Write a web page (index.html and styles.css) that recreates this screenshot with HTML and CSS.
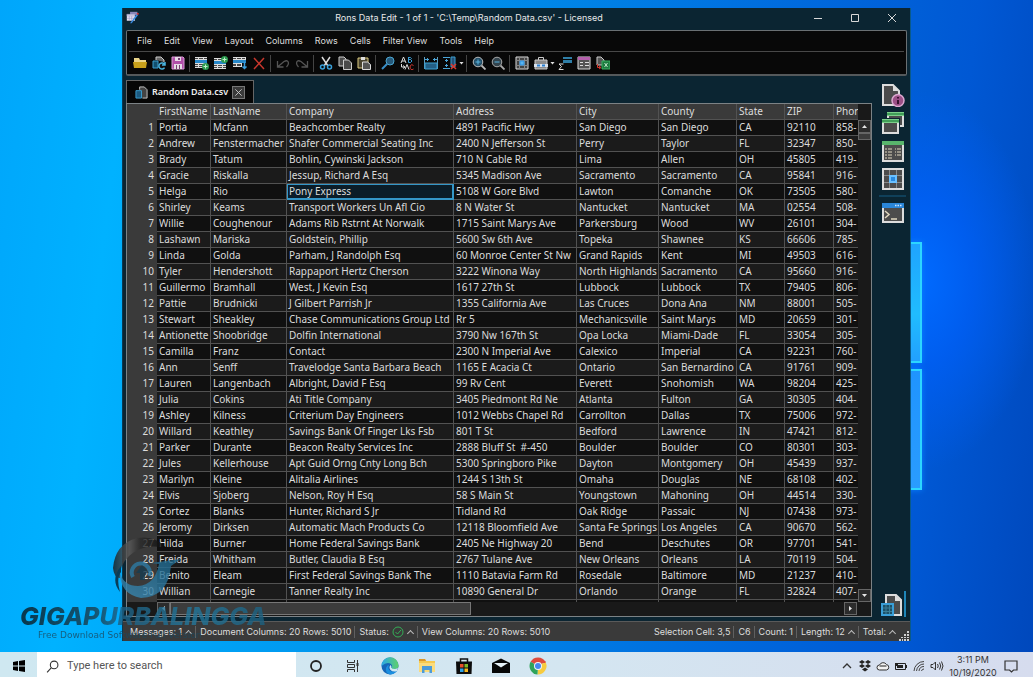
FILE: index.html
```
<!DOCTYPE html>
<html lang="en">
<head>
<meta charset="utf-8">
<title>Rons Data Edit</title>
<link rel="stylesheet" href="styles.css">
</head>
<body>
<main class="desktop">
  <div class="light" aria-hidden="true"><span class="pane pane-top"></span><span class="pane pane-bottom"></span></div>

  <section class="window">
    <header class="titlebar">
      <svg class="app-icon" viewBox="0 0 16 16"><path d="M5 1h9v4H5z" fill="#8a86b8"/><path d="M1 4h10v8H1z" fill="#e4e2f2"/><path d="M1 4h10v2H1zM4 6v6M7 6v6M1 9h10" stroke="#8b87b8" stroke-width=".6" fill="none"/><path d="M5 15L13 4l2 1-8 10z" fill="#3a8be0"/><path d="M13 4l1-2 2 1-1 2z" fill="#d33"/></svg>
      <h1 class="title">Rons Data Edit - 1 of 1 - 'C:\Temp\Random Data.csv' - Licensed</h1>
      <div class="controls">
        <button type="button" aria-label="Minimize"><svg viewBox="0 0 10 10"><path d="M1 5.500h8"/></svg></button>
        <button type="button" aria-label="Maximize"><svg viewBox="0 0 10 10"><path d="M1.500 1.500h7v7h-7z"/></svg></button>
        <button type="button" aria-label="Close"><svg viewBox="0 0 10 10"><path d="M1 1l8 8M9 1l-8 8"/></svg></button>
      </div>
    </header>

    <div class="commands">
      <nav class="menu">
        <button type="button">File</button><button type="button">Edit</button><button type="button">View</button><button type="button">Layout</button><button type="button">Columns</button><button type="button">Rows</button><button type="button">Cells</button><button type="button">Filter View</button><button type="button">Tools</button><button type="button">Help</button>
      </nav>
      <div class="toolbar">
        <div class="tools">
          <button type="button" aria-label="Open"><svg viewBox="0 0 14 14"><path d="M1 2h5l1 2h6v8H1z" fill="#e9d48a"/><path d="M0 6h14l-1 6H1z" fill="#c9a21c"/></svg></button>
          <button type="button" aria-label="Reload"><svg viewBox="0 0 14 14"><path d="M4 4V1h5l3 3v2" stroke="#ccc" fill="#666"/><path d="M1 5h5v7H1z" fill="#12506f" stroke="#3a9fd0"/><path d="M12.500 8.500a3 3 0 1 0 0 3M13 6v3h-3" stroke="#49b4e0" stroke-width="1.500" fill="#101010"/></svg></button>
          <button type="button" aria-label="Save"><svg viewBox="0 0 14 14"><path d="M1 1h11l1 1v11H1z" fill="#b04fa8" stroke="#d99ad4"/><path d="M4 1h6v4H4zM3 8h8v5H3z" fill="#e6dbe6"/><path d="M7 2h2v2H7zM5 9h1v4H5zM8 9h1v4H8z" fill="#744070"/></svg></button>
        </div>
        <div class="tools">
          <button type="button" aria-label="Add row"><svg viewBox="0 0 14 14"><path d="M0 1h12v11H0z" fill="#ddd"/><path d="M0 4h12v3H0z" fill="#2787c8"/><path d="M0 2h3v1H0zM4 2h4v1H4zM9 2h3v1H9zM0 8h3v1H0zM4 8h4v1H4zM0 10h3v1H0zM4 10h4v1H4z" fill="#444"/><circle cx="10.500" cy="10.500" r="3.500" fill="#2d9a50"/><path d="M8.500 10.500h4M10.500 8.500v4" stroke="#bff0c8"/></svg></button>
          <button type="button" aria-label="Insert row"><svg viewBox="0 0 14 14"><path d="M0 2h12v11H0z" fill="#ddd"/><path d="M0 5h12v3H0z" fill="#2787c8"/><path d="M0 3h3v1H0zM4 3h4v1H4zM0 9h3v1H0zM4 9h4v1H4zM9 9h3v1H9zM0 11h3v1H0zM4 11h4v1H4zM9 11h3v1H9z" fill="#444"/><circle cx="10.500" cy="3.500" r="3.500" fill="#2d9a50"/><path d="M8.500 3.500h4M10.500 1.500v4" stroke="#bff0c8"/></svg></button>
          <button type="button" aria-label="Move row"><svg viewBox="0 0 14 14"><path d="M0 1h13v10H0z" fill="#ddd"/><path d="M0 4h13v3H0z" fill="#2787c8"/><path d="M0 2h3v1H0zM4 2h4v1H4zM9 2h3v1H9zM0 8h3v2H0zM4 8h4v2H4z" fill="#444"/><path d="M9 7h5v7H9z" fill="#0b0b0b"/><path d="M11.500 6v6M9.500 10.500l2 2 2-2" stroke="#3a9fe0" stroke-width="1.500" fill="none"/></svg></button>
          <button type="button" aria-label="Delete"><svg viewBox="0 0 14 14"><path d="M2 2l10 11M12 2L2 13" stroke="#c8372d" stroke-width="1.500"/></svg></button>
        </div>
        <div class="tools">
          <button type="button" aria-label="Undo"><svg viewBox="0 0 14 14" fill="none" stroke="#555" stroke-width="1.300"><path d="M1.500 5v6h6M1.500 11L8 5.500q4-2 4.500 1.500 0 2-2 4"/></svg></button>
          <button type="button" aria-label="Redo"><svg viewBox="0 0 14 14" fill="none" stroke="#555" stroke-width="1.300"><path d="M12.500 5v6h-6M12.500 11L6 5.500q-4-2-4.500 1.500 0 2 2 4"/></svg></button>
        </div>
        <div class="tools">
          <button type="button" aria-label="Cut"><svg viewBox="0 0 14 14" fill="none"><path d="M3 1l6 9M11 1L5 10" stroke="#ddd" stroke-width="1.500"/><circle cx="3.500" cy="11" r="2" stroke="#3a9fd8" stroke-width="1.500"/><circle cx="10.500" cy="11" r="2" stroke="#3a9fd8" stroke-width="1.500"/></svg></button>
          <button type="button" aria-label="Copy"><svg viewBox="0 0 14 14" fill="#4a4a4a" stroke="#ccc"><path d="M1 1h5l2 2v7H1z"/><path d="M5.500 4h5l3 3v6.500h-8z"/></svg></button>
          <button type="button" aria-label="Paste"><svg viewBox="0 0 14 14"><path d="M1 2h10v10H1z" fill="#4a4430" stroke="#dccb80"/><path d="M4 1h4v3H4z" fill="#ddd"/><path d="M5.500 6h5l3 2.500v5h-8z" fill="#555" stroke="#ddd"/></svg></button>
        </div>
        <div class="tools">
          <button type="button" aria-label="Find"><svg viewBox="0 0 14 14"><circle cx="9" cy="5" r="4" fill="#26597a" stroke="#4aa5d0"/><path d="M6 8l-5 5" stroke="#3a8fc8" stroke-width="2"/></svg></button>
          <button type="button" aria-label="Replace"><svg viewBox="0 0 14 14" fill="none" stroke="#ddd"><path d="M1 7l2.500-6L6 7M2 5h3"/><path d="M8.500 1v5.500M8.500 1.500h2q2 1 0 2h-2M10.500 3.500q3 1.500 0 3h-2" stroke="#3a9fd8"/><path d="M1.500 8v3h3M3 9.500L5 11l-2 1.500"/><path d="M5 13.500l2-5 2 5"/><path d="M13.500 9.500q-3-2-3.500 1.500.5 4 3.500 2" stroke="#d8382e"/></svg></button>
        </div>
        <div class="tools">
          <button type="button" aria-label="Fit columns"><svg viewBox="0 0 14 14"><path d="M.5 1v12M13.500 1v12" stroke="#5a9cc0" fill="none"/><path d="M1 7h12v6H1z" fill="#245f85" stroke="#3a9fd0"/><path d="M1 3.500h4M9 3.500h4M3.500 2v3M10.500 2v3" stroke="#4aa5d8"/></svg></button>
          <button type="button" aria-label="Fit rows"><svg viewBox="0 0 14 14"><path d="M0 1.500h7M0 12.500h7M3.500 3v3M2 4.500h3M3.500 8v3M2 9.500h3" stroke="#4aa5d8"/><path d="M8 1h4v10H8z" fill="#244f75" stroke="#3a9fd0"/><path d="M8 8l5 5M13 8l-5 5" stroke="#d8382e" stroke-width="1.500"/></svg></button>
          <span class="caret"></span>
        </div>
        <div class="tools">
          <button type="button" aria-label="Zoom in"><svg viewBox="0 0 14 14"><circle cx="6" cy="6" r="4.800" fill="#24506a" stroke="#bbb"/><path d="M3.500 6h5M6 3.500v5" stroke="#5ab5e0"/><path d="M9.500 9.500l4 4" stroke="#bbb" stroke-width="1.800"/></svg></button>
          <button type="button" aria-label="Zoom out"><svg viewBox="0 0 14 14"><circle cx="6" cy="6" r="4.800" fill="#33434c" stroke="#aaa"/><path d="M3.500 6h5" stroke="#5ab5e0"/><path d="M9.500 9.500l4 4" stroke="#aaa" stroke-width="1.800"/></svg></button>
        </div>
        <div class="tools">
          <button type="button" aria-label="Selection"><svg viewBox="0 0 14 14"><path d="M1 1h12v12H1z" fill="#444" stroke="#ddd"/><path d="M4.500 1v12M9.500 1v12M1 4.500h12M1 9.500h12" stroke="#888"/><path d="M5 5h4v4H5z" fill="#5ab5f0" stroke="#2a8fe0"/></svg></button>
          <button type="button" aria-label="Toolbox"><svg viewBox="0 0 14 14"><path d="M4.500 4V1.500h5V4" stroke="#ccc" fill="none"/><path d="M1 4h12v9H1z" fill="#8a8a8a" stroke="#ccc"/><path d="M0 8h14v3H0z" fill="#d8e2ee"/><path d="M3 9.500h8" stroke="#2a7fd0" stroke-width="2" stroke-dasharray="3 2"/></svg></button>
          <span class="caret"></span>
          <button type="button" aria-label="Summary"><svg viewBox="0 0 14 14"><path d="M5 1h9v2H5zM5 4h9v3H5z" fill="#2f7fa8"/><path d="M5.500 8H1l2.500 2.500L1 13.500h4.500" stroke="#ddd" fill="none"/></svg></button>
          <button type="button" aria-label="Form"><svg viewBox="0 0 14 14"><path d="M1 1h12v12H1z" fill="#555" stroke="#ddd"/><path d="M1 1h12v3H1z" fill="#b560ac"/><path d="M3 6.500h3M3 9.500h3M8 6.500h4M8 9.500h4" stroke="#ddd"/></svg></button>
          <button type="button" aria-label="Export"><svg viewBox="0 0 14 14"><path d="M1 1h4l3 3v5H1z" fill="#555" stroke="#ccc"/><path d="M6 5h8v8H6z" fill="#1d7a40" stroke="#39b060"/><path d="M8.500 7l3 4M11.500 7l-3 4" stroke="#bfe8c8"/><path d="M1.500 8v3.500h3M3 10l2 1.500L3 13" stroke="#d8382e" fill="none"/></svg></button>
        </div>
      </div>
    </div>

    <div class="body">
      <div class="document">
        <div class="tab">
          <svg class="tab-icon" viewBox="0 0 14 14"><path d="M5 4V1h5l3 3v9H8" fill="#444" stroke="#ccc"/><path d="M1 5h6v8H1z" fill="#1c5a80" stroke="#3a9fd0"/></svg>
          <span>Random Data.csv</span>
          <button class="tab-close" type="button" aria-label="Close tab"><svg viewBox="0 0 10 10"><path d="M1.500 1.500l7 7M8.500 1.500l-7 7"/></svg></button>
        </div>
        <div class="sheet">
          <div class="grid">
            <table>
              <colgroup><col class="c-num"><col class="c-first"><col class="c-last"><col class="c-company"><col class="c-address"><col class="c-city"><col class="c-county"><col class="c-state"><col class="c-zip"><col class="c-phone"></colgroup>
              <thead><tr><td></td><th>FirstName</th><th>LastName</th><th>Company</th><th>Address</th><th>City</th><th>County</th><th>State</th><th>ZIP</th><th>Phor</th></tr></thead>
              <tbody>
<tr><th>1<td>Portia<td>Mcfann<td>Beachcomber Realty<td>4891 Pacific Hwy<td>San Diego<td>San Diego<td>CA<td>92110<td>858-
<tr><th>2<td>Andrew<td>Fenstermacher<td>Shafer Commercial Seating Inc<td>2400 N Jefferson St<td>Perry<td>Taylor<td>FL<td>32347<td>850-
<tr><th>3<td>Brady<td>Tatum<td>Bohlin, Cywinski Jackson<td>710 N Cable Rd<td>Lima<td>Allen<td>OH<td>45805<td>419-
<tr><th>4<td>Gracie<td>Riskalla<td>Jessup, Richard A Esq<td>5345 Madison Ave<td>Sacramento<td>Sacramento<td>CA<td>95841<td>916-
<tr><th>5<td>Helga<td>Rio<td class="selected">Pony Express<td>5108 W Gore Blvd<td>Lawton<td>Comanche<td>OK<td>73505<td>580-
<tr><th>6<td>Shirley<td>Keams<td>Transport Workers Un Afl Cio<td>8 N Water St<td>Nantucket<td>Nantucket<td>MA<td>02554<td>508-
<tr><th>7<td>Willie<td>Coughenour<td>Adams Rib Rstrnt At Norwalk<td>1715 Saint Marys Ave<td>Parkersburg<td>Wood<td>WV<td>26101<td>304-
<tr><th>8<td>Lashawn<td>Mariska<td>Goldstein, Phillip<td>5600 Sw 6th Ave<td>Topeka<td>Shawnee<td>KS<td>66606<td>785-
<tr><th>9<td>Linda<td>Golda<td>Parham, J Randolph Esq<td>60 Monroe Center St Nw<td>Grand Rapids<td>Kent<td>MI<td>49503<td>616-
<tr><th>10<td>Tyler<td>Hendershott<td>Rappaport Hertz Cherson<td>3222 Winona Way<td>North Highlands<td>Sacramento<td>CA<td>95660<td>916-
<tr><th>11<td>Guillermo<td>Bramhall<td>West, J Kevin Esq<td>1617 27th St<td>Lubbock<td>Lubbock<td>TX<td>79405<td>806-
<tr><th>12<td>Pattie<td>Brudnicki<td>J Gilbert Parrish Jr<td>1355 California Ave<td>Las Cruces<td>Dona Ana<td>NM<td>88001<td>505-
<tr><th>13<td>Stewart<td>Sheakley<td>Chase Communications Group Ltd<td>Rr 5<td>Mechanicsville<td>Saint Marys<td>MD<td>20659<td>301-
<tr><th>14<td>Antionette<td>Shoobridge<td>Dolfin International<td>3790 Nw 167th St<td>Opa Locka<td>Miami-Dade<td>FL<td>33054<td>305-
<tr><th>15<td>Camilla<td>Franz<td>Contact<td>2300 N Imperial Ave<td>Calexico<td>Imperial<td>CA<td>92231<td>760-
<tr><th>16<td>Ann<td>Senff<td>Travelodge Santa Barbara Beach<td>1165 E Acacia Ct<td>Ontario<td>San Bernardino<td>CA<td>91761<td>909-
<tr><th>17<td>Lauren<td>Langenbach<td>Albright, David F Esq<td>99 Rv Cent<td>Everett<td>Snohomish<td>WA<td>98204<td>425-
<tr><th>18<td>Julia<td>Cokins<td>Ati Title Company<td>3405 Piedmont Rd Ne<td>Atlanta<td>Fulton<td>GA<td>30305<td>404-
<tr><th>19<td>Ashley<td>Kilness<td>Criterium Day Engineers<td>1012 Webbs Chapel Rd<td>Carrollton<td>Dallas<td>TX<td>75006<td>972-
<tr><th>20<td>Willard<td>Keathley<td>Savings Bank Of Finger Lks Fsb<td>801 T St<td>Bedford<td>Lawrence<td>IN<td>47421<td>812-
<tr><th>21<td>Parker<td>Durante<td>Beacon Realty Services Inc<td>2888 Bluff St &nbsp;#-450<td>Boulder<td>Boulder<td>CO<td>80301<td>303-
<tr><th>22<td>Jules<td>Kellerhouse<td>Apt Guid Orng Cnty Long Bch<td>5300 Springboro Pike<td>Dayton<td>Montgomery<td>OH<td>45439<td>937-
<tr><th>23<td>Marilyn<td>Kleine<td>Alitalia Airlines<td>1244 S 13th St<td>Omaha<td>Douglas<td>NE<td>68108<td>402-
<tr><th>24<td>Elvis<td>Sjoberg<td>Nelson, Roy H Esq<td>58 S Main St<td>Youngstown<td>Mahoning<td>OH<td>44514<td>330-
<tr><th>25<td>Cortez<td>Blanks<td>Hunter, Richard S Jr<td>Tidland Rd<td>Oak Ridge<td>Passaic<td>NJ<td>07438<td>973-
<tr><th>26<td>Jeromy<td>Dirksen<td>Automatic Mach Products Co<td>12118 Bloomfield Ave<td>Santa Fe Springs<td>Los Angeles<td>CA<td>90670<td>562-
<tr><th>27<td>Hilda<td>Burner<td>Home Federal Savings Bank<td>2405 Ne Highway 20<td>Bend<td>Deschutes<td>OR<td>97701<td>541-
<tr><th>28<td>Freida<td>Whitham<td>Butler, Claudia B Esq<td>2767 Tulane Ave<td>New Orleans<td>Orleans<td>LA<td>70119<td>504-
<tr><th>29<td>Benito<td>Eleam<td>First Federal Savings Bank The<td>1110 Batavia Farm Rd<td>Rosedale<td>Baltimore<td>MD<td>21237<td>410-
<tr><th>30<td>Willian<td>Carnegie<td>Tanner Realty Inc<td>10890 General Dr<td>Orlando<td>Orange<td>FL<td>32824<td>407-
<tr><th><td><td><td><td><td><td><td><td><td>
              </tbody>
            </table>
          </div>
          <div class="vscroll">
            <button type="button" aria-label="Scroll up"><i class="arrow up"></i></button>
            <span class="vthumb"></span>
            <button class="last" type="button" aria-label="Scroll down"><i class="arrow down"></i></button>
          </div>
          <div class="hscroll">
            <button type="button" aria-label="Scroll left"><i class="arrow left"></i></button>
            <span class="hthumb"></span>
            <button class="last" type="button" aria-label="Scroll right"><i class="arrow right"></i></button>
          </div>
        </div>
      </div>
      <aside class="side">
        <button type="button" aria-label="Document information"><svg viewBox="0 0 24 24"><path d="M2 2h10l6 6v14H2z" fill="#4c4c4c" stroke="#ddd" stroke-width="2"/><path d="M12 2v6h6z" fill="#ddd"/><circle cx="17" cy="17.500" r="6" fill="#9c4f86" stroke="#dba8cf" stroke-width="1.500"/><path d="M17 14v1.500M17 17v4" stroke="#3a1230" stroke-width="2"/></svg></button>
        <button type="button" aria-label="Windows"><svg viewBox="0 0 24 24"><path d="M7 2h15v13H7z" fill="#4c4c4c" stroke="#ddd" stroke-width="2"/><path d="M6 1h17v4H6z" fill="#7ccf8a"/><path d="M6 3h17" stroke="#2f8f48" stroke-width="1.500"/><path d="M0 7h19v16H0z" fill="#0b2532"/><path d="M2 9h15v13H2z" fill="#4c4c4c" stroke="#ddd" stroke-width="2"/><path d="M1 8h17v4H1z" fill="#7ccf8a"/><path d="M1 10h17" stroke="#2f8f48" stroke-width="1.500"/></svg></button>
        <button type="button" aria-label="Details"><svg viewBox="0 0 24 24"><path d="M2 3h20v19H2z" fill="#4c4c4c" stroke="#ddd" stroke-width="2"/><path d="M1 2h22v4H1z" fill="#58b56c"/><path d="M4 10h2M7 10h4M4 13h2M7 13h4M4 16h2M7 16h4M4 19h2M7 19h4M14 10h1M16 10h4M14 13h1M16 13h4M14 16h1M16 16h4" stroke="#e0d8c0"/></svg></button>
        <button type="button" aria-label="Cell"><svg viewBox="0 0 24 24"><path d="M2 2h20v20H2z" fill="#4c4c4c" stroke="#ddd" stroke-width="2"/><path d="M8.500 3v18M15.500 3v18M3 8.500h18M3 15.500h18" stroke="#888"/><path d="M9 9h6v6H9z" fill="#2a8ae0" stroke="#6ac0ff" stroke-width="2"/></svg></button>
        <hr>
        <button type="button" aria-label="Console"><svg viewBox="0 0 24 24"><path d="M2 3h20v18H2z" fill="#4c4c4c" stroke="#ddd" stroke-width="2"/><path d="M1 2h22v5H1z" fill="#2a86d8"/><path d="M14 4.500h7" stroke="#cfe6ff" stroke-width="1.500" stroke-dasharray="1.500 1"/><path d="M4 10l4 3.500L4 17M10 18h6" stroke="#e0d8c0" stroke-width="1.500" fill="none"/></svg></button>
        <button class="current" type="button" aria-label="Current document"><svg viewBox="0 0 24 24"><path d="M6 10V2h10l5 5v15h-7" fill="#4c4c4c" stroke="#ddd" stroke-width="2"/><path d="M15 2v6h6z" fill="#ddd"/><path d="M2 11h11v11H2z" fill="#1c5068" stroke="#3a9fd8" stroke-width="2"/><path d="M6 12v9M9.500 12v9M3 15h9M3 18.500h9" stroke="#3a7f98"/></svg></button>
      </aside>
    </div>

    <footer class="status">
      <span>Messages: 1 <i class="chev"></i></span>
      <span>Document Columns: 20 Rows: 5010</span>
      <span>Status: <svg class="ok" viewBox="0 0 12 12"><circle cx="6" cy="6" r="5"/><path d="M3.500 6l2 2 3.500-4"/></svg> <i class="chev"></i></span>
      <span>View Columns: 20 Rows: 5010</span>
      <span class="push">Selection Cell: 3,5</span>
      <span>C6</span>
      <span>Count: 1</span>
      <span>Length: 12 <i class="chev"></i></span>
      <span>Total: <i class="chev"></i></span>
      <svg class="grip" viewBox="0 0 10 10"><path d="M8 0h2v2H8zM5 3h2v2H5zM8 3h2v2H8zM2 6h2v1H2zM5 6h2v1H5zM8 6h2v1H8zM0 8h2v2H0zM3 8h1v2H3zM5 8h2v2H5zM8 8h2v2H8z"/></svg>
    </footer>
  </section>
</main>

<div class="watermark">
  <svg class="emblem" viewBox="0 0 70 64">
    <defs>
      <linearGradient id="ink" x1="0" y1="0" x2="1" y2="0"><stop offset="0" stop-color="#1a1a1a"/><stop offset=".3" stop-color="#5c5c5c"/><stop offset=".5" stop-color="#2c2c2c"/><stop offset="1" stop-color="#0a0a0a"/></linearGradient>
      <linearGradient id="sea" x1="0" y1="1" x2="1" y2="0"><stop offset="0" stop-color="#3c8bb5"/><stop offset="1" stop-color="#1c6488"/></linearGradient>
    </defs>
    <path d="M1 32Q3 8 25 2q18-3 30 10l-6-1Q30 8 17 20 7 30 8 42 2 42 1 32z" fill="url(#ink)"/>
    <path d="M9 30Q-2 44 8 56 4 42 9 36z" fill="#0c2230"/>
    <path d="M8 37q4 13 18 13 17-1 21-22l-8-1 30-4-10 7q-3 31-30 32Q8 58 8 37z" fill="url(#sea)"/>
    <path d="M21 41a9 9 0 1 1 16-1" fill="none" stroke="#2d7aa3" stroke-width="4"/>
    <path d="M24 37l6-8 7 8h-4v7h-5v-7z" fill="#173c50"/>
  </svg>
  <div class="brand">GIGAPURBALINGGA</div>
  <div class="tagline">Free Download Software Full Version</div>
</div>

<footer class="taskbar">
  <button class="start" type="button" aria-label="Start"><svg viewBox="0 0 12 12"><path d="M0 2l5-1v4.500H0zM6 1l6-1v5.500H6zM0 6.500h5V11l-5-1zM6 6.500h6V12l-6-1z"/></svg></button>
  <label class="search">
    <svg viewBox="0 0 12 12"><circle cx="7.500" cy="4.500" r="3.500"/><path d="M5 7l-4 4.500"/></svg>
    <input type="text" placeholder="Type here to search" aria-label="Search">
  </label>
  <div class="apps">
    <button type="button" aria-label="Cortana"><svg viewBox="0 0 18 18"><circle cx="9" cy="9" r="5" fill="none" stroke="#222" stroke-width="1.800"/></svg></button>
    <button type="button" aria-label="Task view"><svg viewBox="0 0 18 18" fill="none" stroke="#333"><path d="M3.500 3v2.500h7V3M3.500 15v-2.500h7V15M3.500 7.500h7v3h-7zM13.500 3v12"/><path d="M12.500 7.500h2" stroke-width="3"/></svg></button>
    <button type="button" aria-label="Edge"><svg viewBox="0 0 18 18"><defs><linearGradient id="edge" x1="0" y1="0" x2="1" y2="0"><stop offset="0" stop-color="#2aa8e8"/><stop offset="1" stop-color="#5fd06a"/></linearGradient></defs><circle cx="9" cy="9" r="8.500" fill="#1566b8"/><path d="M.5 9a8.500 8.500 0 0 1 17-.5q0 3.500-4 3.500-3 0-3-1.500Q12 9 10 7 6 4.500.5 9z" fill="url(#edge)"/><path d="M8 8q-2 4 1.500 6 3 1.500 6-.5 1 0 .5.500Q12 18 9 17.500 4 16 5 11q1-3 3-3z" fill="#1b8fe0"/><path d="M9.500 8q1.500 1 .7 2.500Q11 12 14 12l3-1-1 3q-4 1.500-6.500-1Q7.500 10.500 9.500 8z" fill="#d0e8f2"/></svg></button>
    <button type="button" aria-label="File Explorer"><svg viewBox="0 0 18 18"><path d="M1 2h6l1 2h9v11H1z" fill="#f6c94e"/><path d="M1 2h6l1 2H1z" fill="#d9982a"/><path d="M1 6h16v9H1z" fill="#fbdc7c"/><path d="M4 9h10v7h-2.500v-3h-5v3H4z" fill="#4c9bd8"/></svg></button>
    <button type="button" aria-label="Store"><svg viewBox="0 0 18 18"><path d="M5.500 5V2h7v3" fill="none" stroke="#111" stroke-width="1.500"/><path d="M1 4.500h16l-.5 12.500h-15z" fill="#0c0c0c"/><path d="M5 7h3.500v3.500H5z" fill="#e8502a"/><path d="M9.500 7H13v3.500H9.500z" fill="#7db928"/><path d="M5 11.500h3.500V15H5z" fill="#2ba3e8"/><path d="M9.500 11.500H13V15H9.500z" fill="#f8b820"/></svg></button>
    <button type="button" aria-label="Mail"><svg viewBox="0 0 18 18"><path d="M0 6l9-4.500L18 6v10H0z" fill="#080808"/><path d="M2 6h14l-7 4.500z" fill="#e6f2f8"/></svg></button>
    <button type="button" aria-label="Chrome"><svg viewBox="0 0 18 18"><path d="M9 9L1.600 4.800A8.500 8.500 0 0 1 16.500 5z" fill="#dd4b3e"/><path d="M9 9l7.500-4A8.500 8.500 0 0 1 8.500 17.500z" fill="#f7cb3f"/><path d="M9 9l-.5 8.500A8.500 8.500 0 0 1 1.600 4.800z" fill="#2fa35a"/><path d="M9 5h7.500" stroke="#dd4b3e" stroke-width="2"/><circle cx="9" cy="9" r="4" fill="#eef4f8"/><circle cx="9" cy="9" r="3" fill="#4587ee"/></svg></button>
  </div>
  <div class="tray">
    <svg viewBox="0 0 14 14" fill="none" stroke="#333" stroke-width="1.300"><path d="M3 9l4-4 4 4"/></svg>
    <svg viewBox="0 0 14 14" fill="#222"><path d="M4 1l3 2-3 2-3-2zM10 1l3 2-3 2-3-2zM4 5l3 2-3 2-3-2zM10 5l3 2-3 2-3-2zM7 8.500l3 2-3 2-3-2z"/></svg>
    <svg viewBox="0 0 14 14"><path d="M3.500 11a2.500 2.500 0 0 1 0-5 4 4 0 0 1 7-.5 2.800 2.800 0 0 1 0 5.500z" fill="#f2f2f2" stroke="#333"/><path d="M3.500 7h7" stroke="#888" stroke-width="2"/></svg>
    <svg viewBox="0 0 14 14"><path d="M1.500 4.500h10v6h-10z" fill="none" stroke="#222"/><path d="M3 6h6v3H3zM12 6h1v3h-1zM1 4h3v3H1z" fill="#222"/></svg>
    <svg viewBox="0 0 14 14" fill="none" stroke="#444"><path d="M2 12A10 10 0 0 1 12 2.500M4.500 12A7.500 7.500 0 0 1 12 5M7 12a5 5 0 0 1 5-4.500M9.500 12a2.500 2.500 0 0 1 2.500-2"/></svg>
    <svg viewBox="0 0 14 14" fill="none" stroke="#333"><path d="M1 5.500h2L5.500 3v8L3 8.500H1zM7.500 5q1.500 2 0 4M9.500 3.500q2.500 3.500 0 7M11.500 2.500q3 4.500 0 9"/></svg>
    <time class="clock" datetime="2020-10-19T15:11">3:11 PM<br>10/19/2020</time>
    <button class="notes" type="button" aria-label="Notifications"><svg viewBox="0 0 14 14" fill="none" stroke="#333" stroke-width="1.200"><path d="M1 2h12v9H9.500l-2 2-2-2H1z"/></svg></button>
  </div>
</footer>
</body>
</html>
```
FILE: styles.css
```
* { box-sizing: border-box; }

body {
  margin: 0;
  min-height: 100vh;
  display: flex;
  flex-direction: column;
  position: relative;
  overflow: hidden;
  font: 9px/12px Inter, "Noto Sans", sans-serif;
  color: #dedede;
}

button {
  margin: 0;
  padding: 0;
  border: 0;
  background: none;
  color: inherit;
  font: inherit;
}

svg { display: block; }

/* Desktop */
.desktop {
  flex: 1;
  display: flex;
  position: relative;
  padding: 8px 122px 11px;
  background:
    radial-gradient(ellipse 120px 190px at 89% 43%, #006aff 0%, rgba(0, 96, 250, 0.7) 45%, rgba(0, 80, 220, 0) 100%),
    linear-gradient(97deg, #00a6fb 0%, #00b2ff 12%, #0092ec 40%, #006cde 70%, #0058d4 88%, #0048bc 100%);
}

.light {
  position: absolute;
  top: 242px;
  right: 111px;
  width: 40px;
  display: flex;
  flex-direction: column;
  gap: 6px;
}

.pane {
  height: 121px;
  border: 2px solid #2cd6ff;
  background: linear-gradient(#1fa4ff, #20bcff 60%, #22a0ff);
  box-shadow: 0 0 6px #0a80ff;
}

.pane-bottom { background: linear-gradient(#1f94ff, #2a9cff); }

/* Application window */
.window {
  flex: 1;
  min-width: 0;
  display: flex;
  flex-direction: column;
  position: relative;
  background: #0b2532;
  border-left: 1px solid #0a3a52;
  border-right: 1px solid #0a5a8a;
}

.titlebar {
  display: flex;
  align-items: center;
  height: 20px;
  margin-bottom: 2px;
  padding: 0 0 0 3px;
}

.app-icon { width: 13px; height: 13px; margin-bottom: 2px; }

.title {
  flex: 1;
  margin: 0;
  text-align: center;
  font-size: 9px;
  font-weight: 400;
  color: #e8e8e8;
}

.controls { display: flex; }
.controls button { width: 37px; display: flex; justify-content: center; }
.controls svg { width: 10px; height: 10px; fill: none; stroke: #d8d8d8; }

.commands {
  margin: 0 3px;
  padding: 0 2px;
  border: 1px solid #6a7073;
  border-bottom: 2px solid #55595b;
  border-radius: 2px;
  background: #080808;
}

.menu {
  display: flex;
  gap: 12px;
  height: 21px;
  padding-left: 8px;
  border-bottom: 1px solid #484848;
}

.toolbar { display: flex; align-items: center; height: 22px; padding-left: 1px; }
.tools { display: flex; align-items: center; height: 17px; padding-right: 2px; }
.tools + .tools { border-left: 1px solid #444; padding-left: 2px; }
.tools button { width: 19px; display: flex; justify-content: center; }
.tools svg { width: 14px; height: 14px; }

.caret {
  width: 5px;
  height: 3px;
  background: #ddd;
  clip-path: polygon(0 0, 100% 0, 50% 100%);
}

.body { flex: 1; display: flex; padding: 4px 3px; min-height: 0; }
.document { flex: 1; min-width: 0; display: flex; flex-direction: column; align-items: flex-start; }

.tab {
  display: flex;
  align-items: center;
  gap: 4px;
  height: 23px;
  padding: 0 8px;
  border: 1px solid #666;
  border-bottom: 0;
  background: #060606;
  color: #f0f0f0;
  font: 600 9px/12px "Noto Sans", sans-serif;
}

.tab-icon { width: 13px; height: 13px; }
.tab-close { width: 13px; height: 13px; padding: 1px; border: 1px solid #777; background: #3a3a3a; }
.tab-close svg { width: 9px; height: 9px; stroke: #ccc; }

/* Data grid */
.sheet {
  flex: 1;
  align-self: stretch;
  min-height: 0;
  display: grid;
  grid-template: minmax(0, 1fr) 14px / minmax(0, 1fr) 13px;
  border: 1px solid #7c8285;
  background: #191919;
}

.grid { overflow: hidden; height: 100%; max-height: 498px; }

table {
  width: 740px;
  table-layout: fixed;
  border-collapse: separate;
  border-spacing: 0;
  font: 10px/15px "Noto Sans", sans-serif;
  color: #dcdcdc;
}

.c-num { width: 30px; }
.c-first { width: 54px; }
.c-last { width: 76px; }
.c-company { width: 167px; }
.c-address { width: 123px; }
.c-city { width: 82px; }
.c-county { width: 78px; }
.c-state { width: 48px; }
.c-zip { width: 49px; }
.c-phone { width: 33px; }

th, td {
  height: 16px;
  padding: 0 0 0 2px;
  overflow: hidden;
  white-space: nowrap;
  text-align: left;
  font-weight: 400;
  border-bottom: 1px solid #525252;
  border-right: 1px solid #525252;
}

thead th, thead td, tbody th { background: #3a3a3a; }
tbody th { padding: 0 2px 0 0; text-align: right; border-color: #3a3a3a; }
thead td { border-color: #3a3a3a; }
tbody tr:nth-child(odd) td { background: #101010; }
tbody tr:nth-child(even) td { background: #1b1b1b; }
tbody tr td.selected { background: #0b1d28; box-shadow: inset 0 0 0 1px #3497c8; border-color: #3497c8; }

.vscroll { display: flex; flex-direction: column; padding-top: 16px; }
.hscroll { grid-column: 1 / -1; display: flex; padding: 0 14px 1px 30px; }
.vscroll button, .hscroll button {
  width: 13px;
  height: 13px;
  border: 1px solid #666;
  background: #2c2c2c;
  display: grid;
  place-items: center;
}
.vscroll .last { margin-top: auto; }
.hscroll .last { margin-left: auto; }
.vthumb { height: 7px; border: 1px solid #666; background: #3c3c3c; }
.hthumb { width: 43%; border: 1px solid #777; background: #3c3c3c; }

.arrow { background: #e6e6e6; width: 5px; height: 3px; }
.up { clip-path: polygon(50% 0, 100% 100%, 0 100%); }
.down { clip-path: polygon(0 0, 100% 0, 50% 100%); }
.left, .right { width: 3px; height: 5px; }
.left { clip-path: polygon(100% 0, 100% 100%, 0 50%); }
.right { clip-path: polygon(0 0, 100% 50%, 0 100%); }

.side {
  width: 35px;
  display: flex;
  flex-direction: column;
  align-items: stretch;
  gap: 4px;
  padding: 3px 1px 0 7px;
}
.side button { display: flex; justify-content: center; }
.side svg { width: 24px; height: 24px; }
.side hr { width: 100%; height: 2px; margin: 0; border: 0; background: #10405a; }
.side .current { margin-top: auto; padding-top: 2px; border-right: 2px solid #1f86b8; }

.status {
  display: flex;
  align-items: center;
  height: 20px;
  padding: 0 1px 0 3px;
  border-top: 1px solid #5a5a5a;
  background: #3a3a3a;
}
.status span {
  display: flex;
  align-items: center;
  gap: 3px;
  padding: 0 3px 0 4px;
  white-space: nowrap;
}
.status span + span { border-left: 1px solid #606060; }
.status .push { margin-left: auto; border-left: 0; }
.ok { width: 12px; height: 12px; fill: none; stroke: #35b058; }
.chev { width: 5px; height: 5px; margin: 3px 1px 0; border: solid #bbb; border-width: 1px 0 0 1px; transform: rotate(45deg); }
.grip { width: 10px; height: 10px; align-self: flex-end; fill: #d0d0d0; }

/* Watermark laid over the desktop */
.watermark {
  position: absolute;
  left: 20px;
  bottom: 37px;
  display: flex;
  flex-direction: column;
  opacity: 0.8;
  pointer-events: none;
}
.emblem { width: 70px; height: 64px; margin-left: 92px; margin-bottom: 2px; }
.brand {
  font: italic 800 25px/28px Inter, sans-serif;
  color: transparent;
  background: linear-gradient(90deg, #0a1a22, #1a3f50 30%, #1f6285 42%, #24789c 70%, #1c6080);
  background-clip: text;
  -webkit-background-clip: text;
}
.tagline { padding-left: 18px; font: 9px/10px "DejaVu Sans", sans-serif; color: #1c4a60; }

/* Taskbar */
.taskbar {
  display: flex;
  align-items: stretch;
  height: 25px;
  background: linear-gradient(90deg, #cfe8f1, #d4e6f1 55%, #d6dcee);
  color: #333;
}
.start { width: 37px; display: grid; place-items: center; padding-top: 3px; }
.start svg { width: 12px; height: 12px; fill: #000; }
.search { flex: 0 1 259px; display: flex; align-items: center; gap: 8px; padding: 3px 9px 0; background: #fff; }
.search svg { width: 13px; height: 13px; fill: none; stroke: #333; }
.search input { flex: 1; min-width: 0; padding: 0; border: 0; background: none; outline: 0; font: 11px/16px Roboto, sans-serif; }
.search input::placeholder { color: #555; opacity: 1; }
.apps { display: flex; align-items: center; padding: 3px 0 0 1px; }
.apps button { width: 37px; display: flex; justify-content: center; }
.apps svg { width: 18px; height: 18px; }
.tray { display: flex; align-items: center; gap: 4px; margin-left: auto; padding: 3px 15px 0 0; }
.tray svg { width: 14px; height: 14px; }
.clock { width: 50px; text-align: center; line-height: 13px; color: #333; }
.notes { margin-left: 2px; }
```
